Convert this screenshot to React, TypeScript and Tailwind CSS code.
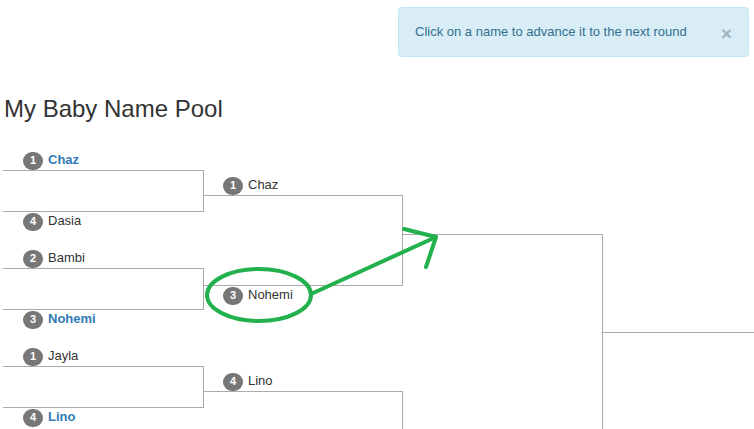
import React from "react";

type Entry = { seed: number; name: string; won?: boolean };

function Label({ entry, pad }: { entry?: Entry; pad: string }) {
  return (
    <div className={`h-[19px] flex items-center ${pad}`}>
      {entry && (
        <>
          <span className="w-[20px] h-[18px] rounded-full bg-[#777777] text-white text-[11px] font-bold flex items-center justify-center leading-none">
            {entry.seed}
          </span>
          <span
            className={`ml-[5px] pb-[2px] text-[13px] leading-none ${
              entry.won ? "font-bold text-[#337ab7]" : "text-[#333333]"
            }`}
          >
            {entry.name}
          </span>
        </>
      )}
    </div>
  );
}

function Match({
  top,
  bottom,
  box,
  pad,
}: {
  top?: Entry;
  bottom?: Entry;
  box: string;
  pad: string;
}) {
  return (
    <div className="flex flex-col">
      <Label entry={top} pad={pad} />
      <div className={`border-y border-r border-[#aaaaaa] ${box}`} />
      <Label entry={bottom} pad={pad} />
    </div>
  );
}

const round1: [Entry, Entry][] = [
  [
    { seed: 1, name: "Chaz", won: true },
    { seed: 4, name: "Dasia" },
  ],
  [
    { seed: 2, name: "Bambi" },
    { seed: 3, name: "Nohemi", won: true },
  ],
  [
    { seed: 1, name: "Jayla" },
    { seed: 4, name: "Lino", won: true },
  ],
];

export default function App() {
  return (
    <div className="relative w-[754px] h-[429px] overflow-hidden bg-white font-['Liberation_Sans',Arial,sans-serif] text-[#333333]">
      <div className="flex justify-end pt-[7px] pr-[5px]">
        <div className="w-[351px] h-[50px] rounded-[4px] border border-[#bce8f1] bg-[#d9edf7] flex items-center justify-between pl-[16px] pr-[16px]">
          <span className="text-[13px] text-[#31708f]">
            Click on a name to advance it to the next round
          </span>
          <span className="mt-[3px] text-[19px] font-bold leading-none text-[#a4b3bc]">
            ×
          </span>
        </div>
      </div>

      <h3 className="mt-[39px] pl-[4px] text-[24px] leading-[26px] font-normal">
        My Baby Name Pool
      </h3>

      <div className="flex items-start pl-[3px]">
        <div className="w-[201px] flex flex-col gap-[18px] pt-[29px]">
          {round1.map(([a, b], i) => (
            <Match key={i} top={a} bottom={b} box="h-[42px]" pad="pl-[20px]" />
          ))}
        </div>

        <div className="w-[199px] flex flex-col gap-[67px] pt-[54px]">
          <Match
            top={{ seed: 1, name: "Chaz" }}
            bottom={{ seed: 3, name: "Nohemi" }}
            box="h-[91px]"
            pad="pl-[19px]"
          />
          <Match top={{ seed: 4, name: "Lino" }} box="h-[91px]" pad="pl-[19px]" />
        </div>

        <div className="w-[200px] pt-[93px]">
          <Match box="h-[200px]" pad="pl-[19px]" />
        </div>

        <div className="flex-1 mt-[210px] border-t border-[#aaaaaa]" />
      </div>

      <svg
        className="absolute inset-0 pointer-events-none"
        width="754"
        height="429"
        viewBox="0 0 754 429"
        fill="none"
        stroke="#22b14c"
        strokeWidth="4"
        strokeLinecap="round"
        strokeLinejoin="round"
      >
        <ellipse cx="259" cy="295" rx="52" ry="26" />
        <path d="M311 294 L436 237" />
        <path d="M404 229 L436 237 L426 267" />
      </svg>
    </div>
  );
}
